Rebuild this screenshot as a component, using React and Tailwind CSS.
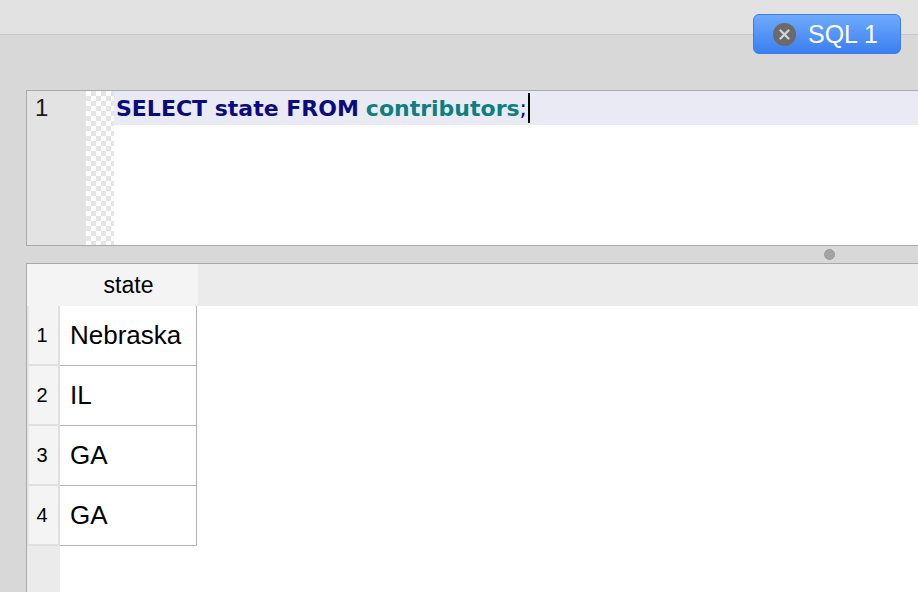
import React from 'react';

const rows = ['Nebraska', 'IL', 'GA', 'GA'];

function CloseDot() {
  return (
    <span className="w-[23px] h-[23px] rounded-full bg-[#6a6a6a] flex items-center justify-center">
      <svg width="11" height="11" viewBox="0 0 11 11">
        <path d="M1.5 1.5 L9.5 9.5 M9.5 1.5 L1.5 9.5" stroke="#d6d6d6" strokeWidth="2.2" strokeLinecap="round" />
      </svg>
    </span>
  );
}

export default function App() {
  return (
    <div className="relative w-[918px] h-[592px] overflow-hidden bg-[#d8d8d8] flex flex-col" style={{ fontFamily: '"Liberation Sans", Arial, sans-serif' }}>
      {/* top strip */}
      <div className="h-[35px] shrink-0 bg-[#e2e2e2] border-b border-[#c9c9c9]" />

      <button className="absolute top-[14px] left-[753px] w-[148px] h-[40px] rounded-[6px] border border-[#3f7de6] bg-gradient-to-b from-[#6eaafb] to-[#3b7ef1] flex items-center gap-[12px] pl-[19px] text-white text-[25px] leading-none">
        <CloseDot />
        <span className="pt-[1px]">SQL 1</span>
      </button>

      {/* editor */}
      <div className="mt-[55px] pl-[26px]">
        <div className="h-[156px] border-y border-l border-[#a9a9a9] bg-white flex">
          <div className="w-[59px] bg-[#e3e3e3] text-[24px] text-[#1a1a1a] pl-[8px] pt-[4px] leading-[26px]">1</div>
          <div className="w-[28px] bg-[repeating-conic-gradient(#e5e5e5_0%_25%,#ffffff_0%_50%)] bg-[length:10px_10px]" />
          <div className="flex-1">
            <div className="h-[34px] bg-[#e9eaf4] flex items-center pl-[2px] text-[22px] font-bold" style={{ fontFamily: '"DejaVu Sans", Verdana, sans-serif' }}>
              <span className="text-[#0b0a7e]">SELECT state FROM</span>
              <span className="text-[#0e7f7f] ml-[7px]">contributors</span>
              <span className="text-[#0b0a7e] font-normal">;</span>
              <span className="w-[2px] h-[30px] bg-black ml-[1px]" />
            </div>
          </div>
        </div>
      </div>

      {/* splitter */}
      <div className="h-[17px] shrink-0 flex items-center justify-end pr-[83px]">
        <span className="w-[11px] h-[11px] rounded-full bg-[#a3a3a3] border border-[#999]" />
      </div>

      {/* results */}
      <div className="flex-1 ml-[26px] border-t border-l border-[#a9a9a9] bg-white flex flex-col">
        <div className="h-[42px] flex bg-[#ebebeb]">
          <div className="w-[171px] bg-[#f4f4f4] flex items-center justify-center pl-[32px] text-[23px] text-black">state</div>
        </div>
        <div className="flex flex-1">
          <div className="w-[33px] flex flex-col bg-[#ebebeb]">
            {rows.map((r, i) => (
              <div key={i} className="h-[60px] bg-[#f4f4f4] border-l-2 border-r-2 border-b-2 border-l-[#e6e6e6] border-r-[#dedede] border-b-[#e0e0e0] flex items-center justify-center pr-[3px] text-[20px] text-black">
                {i + 1}
              </div>
            ))}
          </div>
          <div className="flex flex-col">
            {rows.map((r, i) => (
              <div key={i} className="w-[137px] h-[60px] border-r border-b border-[#b3b3b3] flex items-center pl-[10px] text-[26px] text-black">
                {r}
              </div>
            ))}
          </div>
        </div>
      </div>
    </div>
  );
}
